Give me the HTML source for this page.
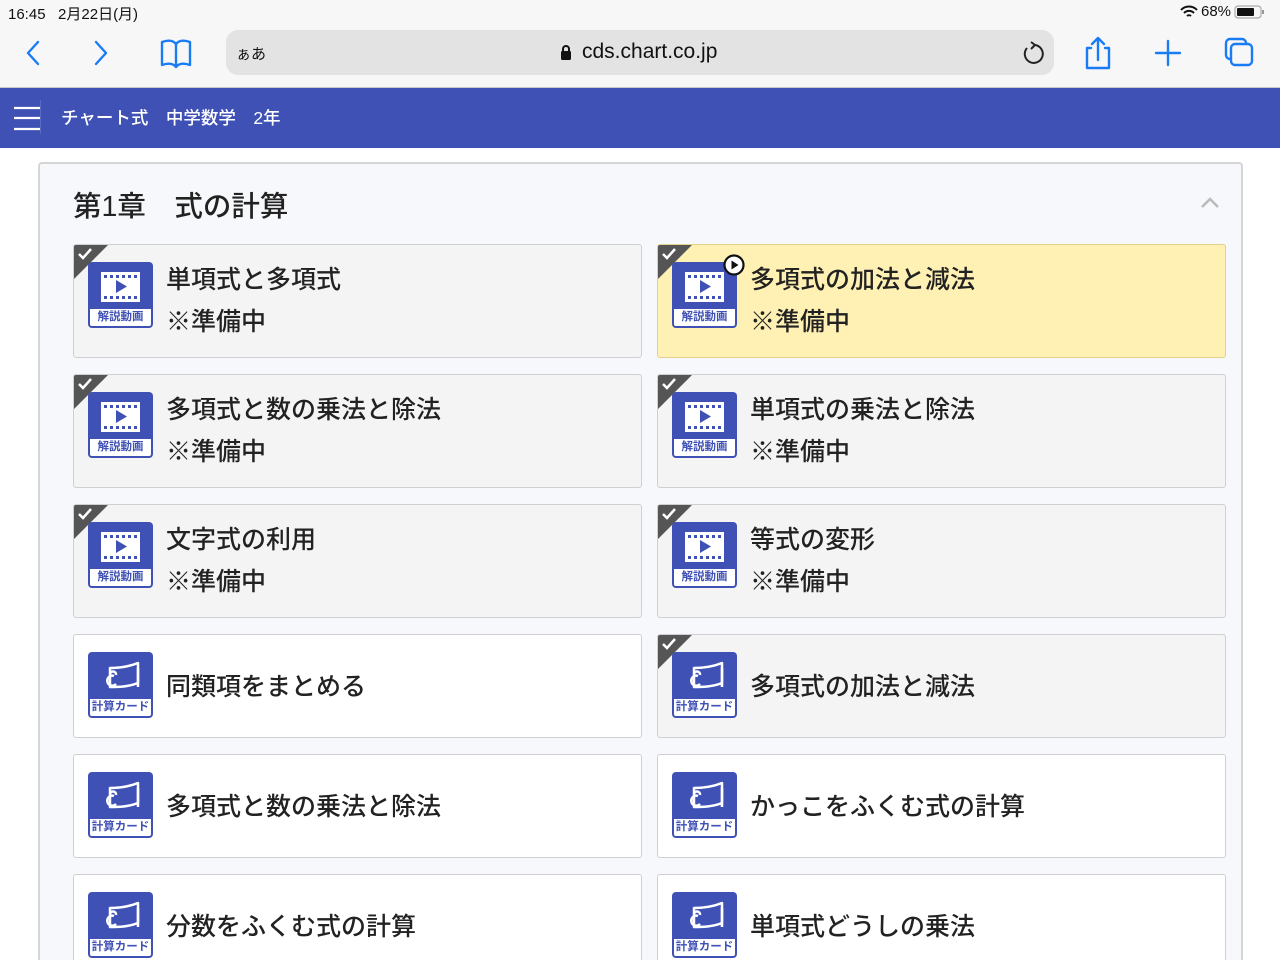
<!DOCTYPE html>
<html style="width:1280px;height:960px;overflow:hidden"><head><meta charset="utf-8"><style>
*{box-sizing:border-box;margin:0;padding:0}
body{width:1280px;height:960px;overflow:hidden;background:#fff;font-family:"Liberation Sans","Noto Sans CJK JP",sans-serif;position:relative;color:#222}
.abs{position:absolute}
#top{left:0;top:0;width:1280px;height:88px;background:#f7f7f7;border-bottom:1px solid #c8c8c8}
#bar{left:0;top:88px;width:1280px;height:60px;background:#3f51b5}
#panel{left:38px;top:162px;width:1205px;height:798px;background:#f7f8fc;border:2px solid #d6d6d6;border-bottom:none;border-radius:4px 4px 0 0}
.card{position:absolute;width:569px;border:1.5px solid #d0d0d0;border-radius:3px;background:#fff;overflow:hidden}
.card.done{background:#f4f4f4}
.card.yel{background:#fff0b3;border-color:#e2d28a}
.tri{position:absolute;left:0;top:0;width:0;height:0;border-top:34px solid #555;border-right:34px solid transparent}
.tri svg{position:absolute;left:3px;top:-32px}
.ic{position:absolute;left:14px;width:65px;height:66px;background:#3f51b5;border-radius:4px}
.ic .lab{position:absolute;left:2px;right:2px;bottom:2px;height:17px;background:#fff;border-radius:0 0 2px 2px;color:#3f51b5;font-size:11.5px;font-weight:bold;line-height:17px;text-align:center}
.ic svg{position:absolute;left:0;top:0}
.t1{position:absolute;left:92px;font-size:25px;font-weight:500;color:#222;white-space:nowrap}
</style></head><body>
<div id="top" class="abs"></div>
<div class="abs" style="left:8px;top:3px;font-size:15px;color:#111">16:45&nbsp;&nbsp;&nbsp;2月22日(月)</div>
<div class="abs" style="left:1180px;top:3px;font-size:15px;color:#111;display:flex;align-items:center;gap:3px">
<svg width="18" height="14" viewBox="0 0 18 14"><path d="M1 5a11 11 0 0 1 16 0M4 8a7 7 0 0 1 10 0M7 11a3 3 0 0 1 4 0" stroke="#111" stroke-width="2" fill="none"/></svg>68%
<svg width="32" height="16" viewBox="0 0 32 16"><rect x="1" y="2" width="26" height="12" rx="3" stroke="#999" fill="none"/><rect x="3" y="4" width="17" height="8" rx="1" fill="#111"/><rect x="28" y="6" width="2" height="4" fill="#999"/></svg></div>
<svg class="abs" style="left:20px;top:36px" width="1250" height="36" viewBox="0 0 1250 36">
<g stroke="#1a7cf5" stroke-width="2.4" fill="none" stroke-linecap="round" stroke-linejoin="round">
<path d="M18 6 8 17 18 28"/><path d="M76 6 86 17 76 28"/>
<path d="M142 6c6-2 11-2 14 2 3-4 8-4 14-2v23c-6-2-11-2-14 2-3-4-8-4-14-2z M156 8v23"/>
<path d="M1071 12h-4v20h22V12h-4M1078 24V3M1072 8l6-6 6 6"/>
<path d="M1148 5v24M1136 17h24"/>
<rect x="1206" y="3" width="20" height="20" rx="4"/><rect x="1211" y="8" width="21" height="21" rx="4" fill="#f7f7f7"/>
</g></svg>
<div class="abs" style="left:226px;top:30px;width:828px;height:45px;background:#e3e3e3;border-radius:12px"></div>
<div class="abs" style="left:236px;top:43px;font-size:15px;color:#111">ぁあ</div>
<svg class="abs" style="left:560px;top:44px" width="12" height="17" viewBox="0 0 12 17"><path d="M3 8V5a3 3 0 0 1 6 0v3" stroke="#111" stroke-width="2" fill="none"/><rect x="1" y="7" width="10" height="9" rx="1.5" fill="#111"/></svg>
<div class="abs" style="left:582px;top:40px;font-size:21px;color:#111">cds.chart.co.jp</div>
<svg class="abs" style="left:1020px;top:40px" width="26" height="26" viewBox="0 0 26 26"><path d="M15 5a9 9 0 1 1-8 3" stroke="#222" stroke-width="2" fill="none"/><path d="M11 2l4 3-4 4" stroke="#222" stroke-width="2" fill="none"/></svg>
<div id="bar" class="abs"></div>
<svg class="abs" style="left:12px;top:104px" width="30" height="30"><g stroke="#fff" stroke-width="2.2"><path d="M2 4h26M2 14h26M2 25h26"/></g></svg>
<div class="abs" style="left:40px;top:100px;width:1px;height:34px;background:#5a6bc4"></div>
<div class="abs" style="left:61px;top:105px;font-size:17.5px;font-weight:500;color:#fff;white-space:pre">チャート式　中学数学　2年</div>
<div id="panel" class="abs"></div>
<div class="abs" style="left:73px;top:184px;font-size:28.5px;font-weight:500;color:#222;white-space:pre">第1章　式の計算</div>
<svg class="abs" style="left:1200px;top:196px" width="20" height="14"><path d="M2 11 10 3 18 11" stroke="#bbb" stroke-width="2.5" fill="none"/></svg>

<div id="cards"></div>
<script>
var V='<svg width="65" height="49" viewBox="0 0 65 49"><rect x="13" y="10" width="39" height="30" fill="#fff"/><g fill="#3f51b5"><rect x="16" y="13" width="3" height="3"/><rect x="22" y="13" width="3" height="3"/><rect x="28" y="13" width="3" height="3"/><rect x="34" y="13" width="3" height="3"/><rect x="40" y="13" width="3" height="3"/><rect x="46" y="13" width="3" height="3"/><rect x="16" y="34" width="3" height="3"/><rect x="22" y="34" width="3" height="3"/><rect x="28" y="34" width="3" height="3"/><rect x="34" y="34" width="3" height="3"/><rect x="40" y="34" width="3" height="3"/><rect x="46" y="34" width="3" height="3"/><path d="M28 18v13l11-6.5z"/></g></svg><div class="lab">解説動画</div>';
var C='<svg width="65" height="49" viewBox="0 0 65 49"><g stroke="#fff" stroke-width="2.5" fill="none" stroke-linejoin="round"><path d="M22 16c8 0 18-1 28-5v20c-10 4-20 4-28 4z"/><path d="M50 16v19"/><path d="M26 24a5 5 0 1 0 2 8M22 22a3 3 0 1 1 6 1"/></g></svg><div class="lab">計算カード</div>';
var tick='<div class="tri"><svg width="16" height="14" viewBox="0 0 16 14"><path d="M2 7l4 4 8-9" stroke="#fff" stroke-width="2.5" fill="none"/></svg></div>';
var d=[
[0,244,114,'done',V,'単項式と多項式',1],[1,244,114,'yel',V,'多項式の加法と減法',1],
[0,374,114,'done',V,'多項式と数の乗法と除法',1],[1,374,114,'done',V,'単項式の乗法と除法',1],
[0,504,114,'done',V,'文字式の利用',1],[1,504,114,'done',V,'等式の変形',1],
[0,634,104,'',C,'同類項をまとめる',0],[1,634,104,'done',C,'多項式の加法と減法',0],
[0,754,104,'',C,'多項式と数の乗法と除法',0],[1,754,104,'',C,'かっこをふくむ式の計算',0],
[0,874,104,'',C,'分数をふくむ式の計算',0],[1,874,104,'',C,'単項式どうしの乗法',0]];
var h='';
d.forEach(function(c){
var x=c[0]?657:73, vid=c[6];
h+='<div class="card '+c[3]+'" style="left:'+x+'px;top:'+c[1]+'px;height:'+c[2]+'px">'+(c[3]?tick:'')+
'<div class="ic" style="top:17px">'+c[4]+'</div>';
if(c[3]=='yel')h+='<svg style="position:absolute;left:65px;top:9px" width="22" height="22"><circle cx="11" cy="11" r="9.5" fill="#fff" stroke="#111" stroke-width="2.2"/><path d="M8.5 6.5v9l7-4.5z" fill="#111"/></svg>';
if(vid)h+='<div class="t1" style="top:15px">'+c[5]+'</div><div class="t1" style="top:57px">※準備中</div>';
else h+='<div class="t1" style="top:'+(c[2]/2-20)+'px">'+c[5]+'</div>';
h+='</div>';});
document.getElementById('cards').innerHTML=h;
</script>
</body></html>
